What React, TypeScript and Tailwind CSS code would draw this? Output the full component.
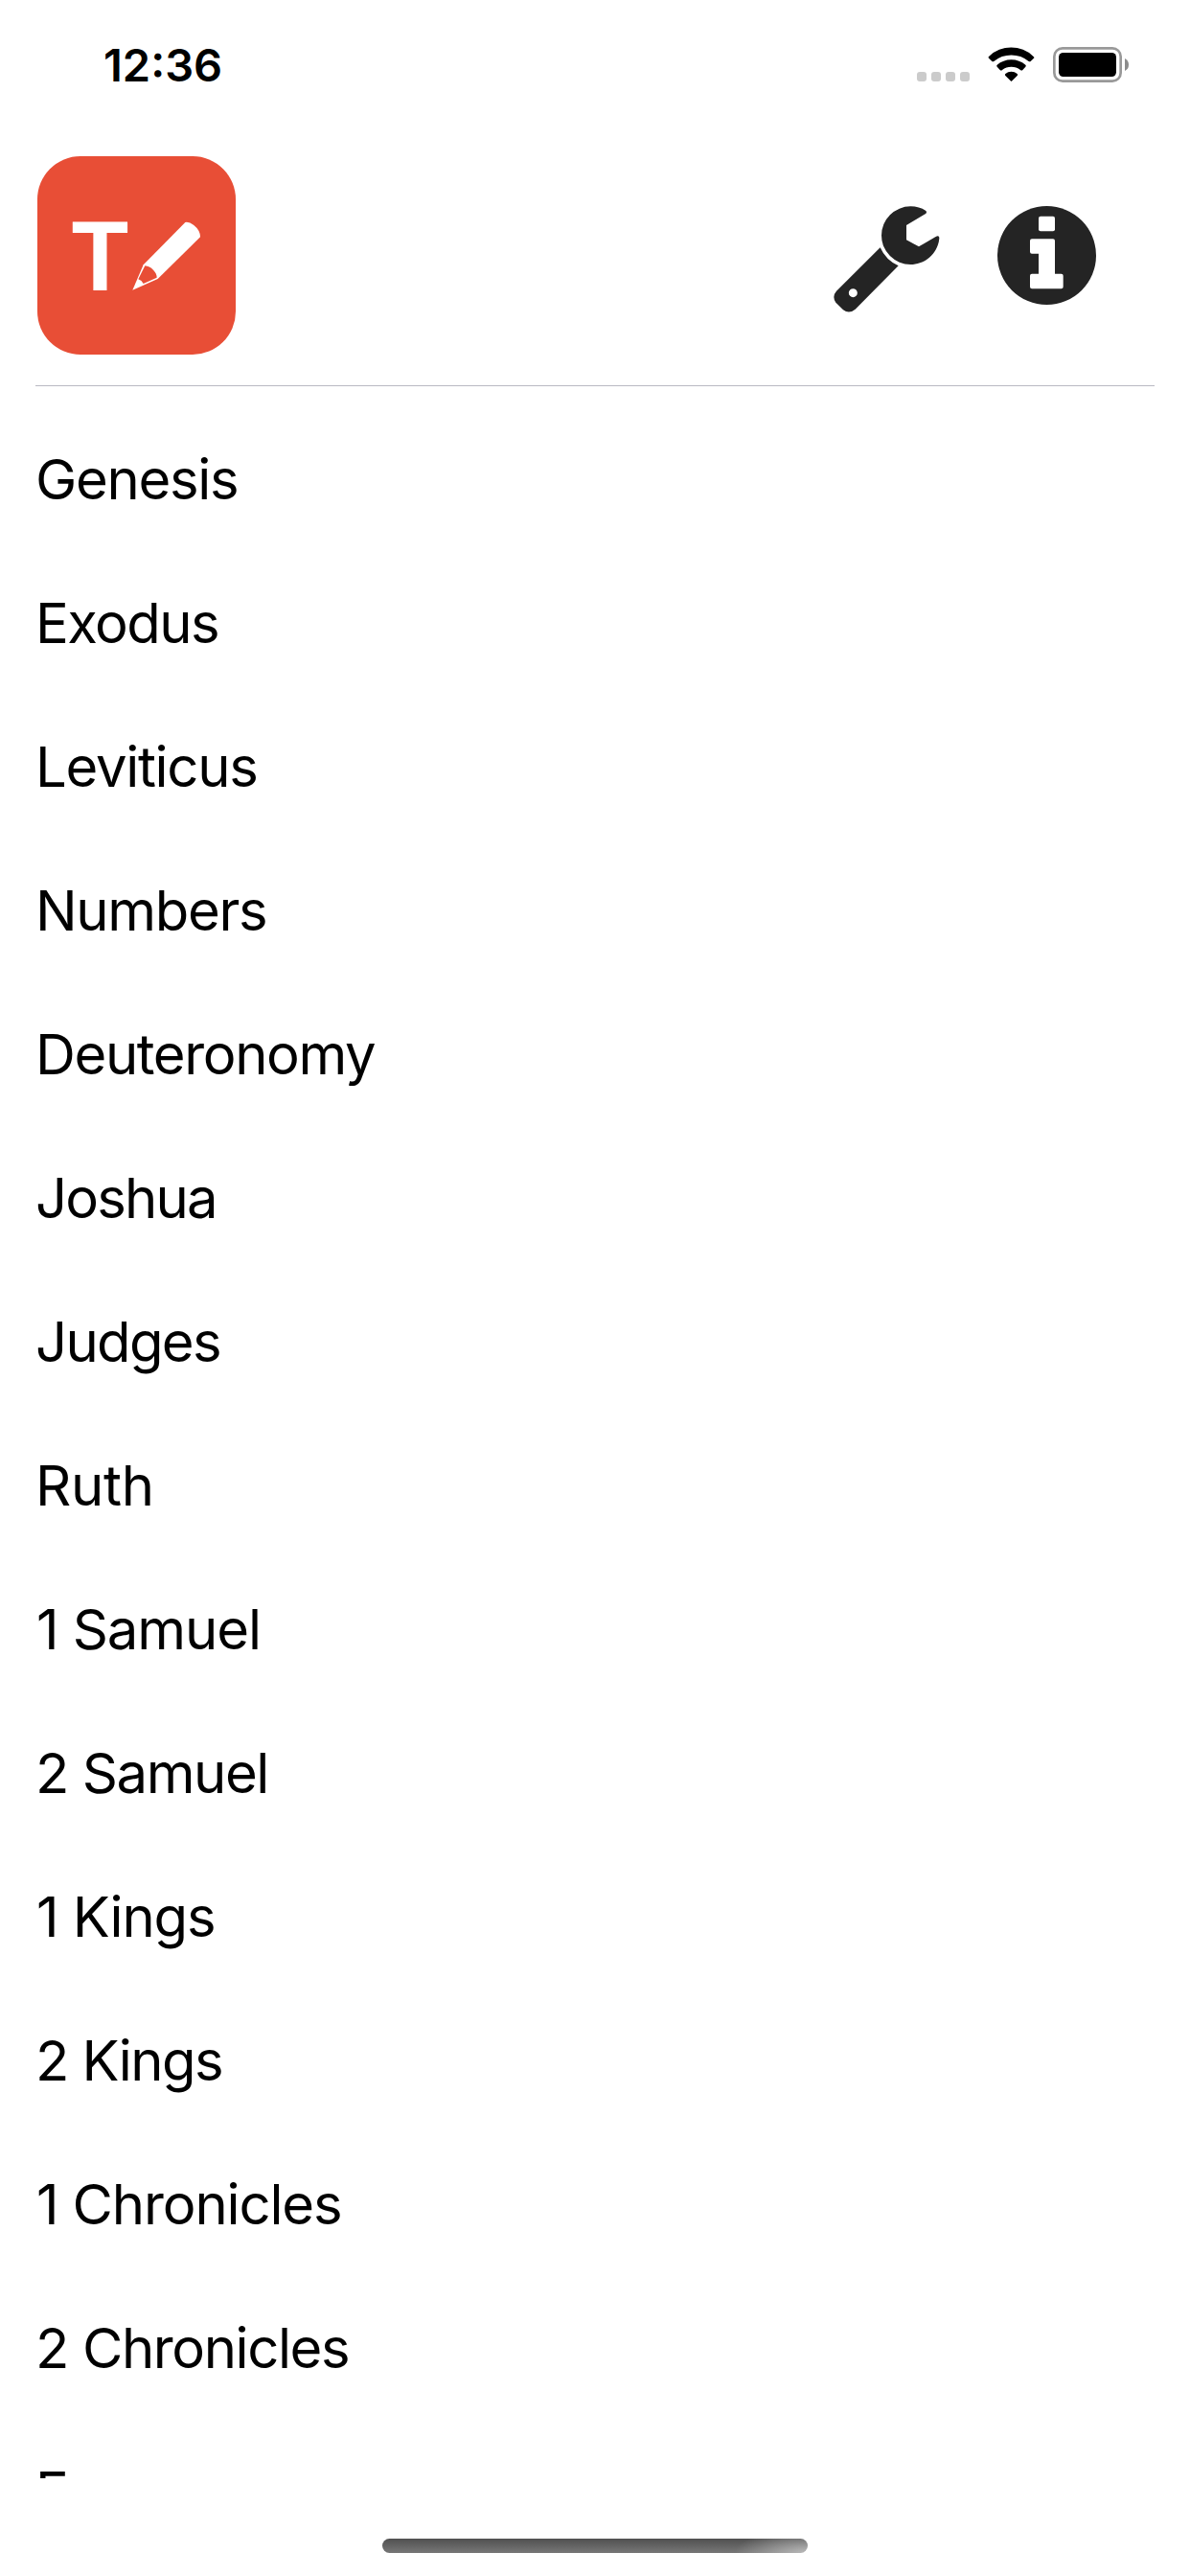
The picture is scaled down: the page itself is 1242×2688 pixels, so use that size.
import React from "react";

type Book = { name: string; className: string };

const books: Book[] = [
  { name: "Genesis", className: "tracking-[-1.3px]" },
  { name: "Exodus", className: "tracking-[-1.56px]" },
  { name: "Leviticus", className: "tracking-[-1.3px]" },
  { name: "Numbers", className: "tracking-[-1.33px]" },
  { name: "Deuteronomy", className: "tracking-[-1.38px]" },
  { name: "Joshua", className: "tracking-[-1.8px]" },
  { name: "Judges", className: "tracking-[-1.66px]" },
  { name: "Ruth", className: "tracking-[-0.3px]" },
  { name: "1 Samuel", className: "pl-px tracking-[-1.1px]" },
  { name: "2 Samuel", className: "tracking-[-1.44px]" },
  { name: "1 Kings", className: "pl-px tracking-[-1.1px]" },
  { name: "2 Kings", className: "tracking-[-1.57px]" },
  { name: "1 Chronicles", className: "pl-px tracking-[-1.14px]" },
  { name: "2 Chronicles", className: "tracking-[-1.39px]" },
  { name: "Ezra", className: "tracking-[-1.4px]" },
];

function WifiIcon() {
  return (
    <svg viewBox="567 147 147 111" className="h-[37px] w-[49px]" fill="#000">
      <path d="M571 176A100 100 0 0 1 709 176Q714 179 711 182L701 192Q698 194 695 192A86 86 0 0 0 586 192Q583 194 580 192L570 182Q567 179 571 176Z" />
      <path d="M596 203A68 68 0 0 1 685 203Q688 206 685 209L676 219Q673 222 669 219A46 46 0 0 0 612 219Q609 222 605 219L596 209Q593 206 596 203Z" />
      <path d="M622 231A30 30 0 0 1 659 231Q662 234 659 237L643 253Q640.5 256 638 253L622 237Q619 234 622 231Z" />
    </svg>
  );
}

function BatteryIcon() {
  return (
    <svg viewBox="771 147 240 111" className="h-[37px] w-[80px]">
      <rect x="775" y="151" width="208" height="103" rx="26" fill="none" stroke="#999" strokeWidth="8" />
      <rect x="789" y="165" width="180" height="75" rx="14" fill="#000" />
      <path d="M996 183Q1008 189 1008 202.500Q1008 216 996 222Z" fill="#8c8c8c" />
    </svg>
  );
}

function StatusBar() {
  return (
    <div className="flex h-[163px] shrink-0 items-start justify-between pl-[108px] pr-[63px]">
      <span className="mt-[39px] text-[47px] leading-[57px] font-semibold">12:36</span>
      <div className="mt-[49px] flex items-end gap-[19px]">
        <div className="mb-px flex gap-[5px]">
          {[0, 1, 2, 3].map((i) => (
            <span key={i} className="size-[10px] rounded-[3px] bg-[#cbcbcb]" />
          ))}
        </div>
        <WifiIcon />
        <BatteryIcon />
      </div>
    </div>
  );
}

function Logo() {
  return (
    <svg viewBox="117 490 621 621" className="size-[207px]">
      <rect x="117" y="490" width="621" height="621" rx="135" fill="#e84e36" />
      <text
        transform="translate(313.500 911) scale(.94 1)"
        textAnchor="middle"
        fontFamily="'Liberation Sans', Arial, sans-serif"
        fontWeight="700"
        fontSize="310"
        fill="#fff"
      >
        T
      </text>
      <path
        d="M580 697Q591 694 607 706Q627 722 627 743L494 874L415 909L449 830Z"
        fill="#fff"
      />
      <path d="M454 833Q468 834 480 846Q491 857 491 870L449 889Q444 878 433 875Z" fill="#e84e36" />
    </svg>
  );
}

function WrenchIcon() {
  return (
    <svg viewBox="84 645 333 333" className="size-[111px]" fill="#242424">
      <path d="M372 659C377 662 375 667 371 670L312 705V751L351 772L404 741C410 737 415 738 415 746C411 792 372 828 325 828A91 91 0 1 1 325 646C343 646 360 651 372 659Z" />
      <path
        fillRule="evenodd"
        d="M230 775Q248 815 287 832L152 968Q133 984 114 970L91 947Q78 928 93 911ZM145 903.500a13.500 13.500 0 1 0 0 27a13.500 13.500 0 1 0 0-27Z"
      />
    </svg>
  );
}

function InfoIcon() {
  return (
    <svg viewBox="597 646 309 309" className="size-[103px]">
      <circle cx="751.500" cy="800.500" r="154.500" fill="#242424" />
      <rect x="726" y="678" width="51" height="47" rx="6" fill="#fff" />
      <path
        d="M705 749H771Q777 749 777 755V858H797Q803 858 803 864V899Q803 905 797 905H705Q699 905 699 899V864Q699 858 705 858H726V795H705Q699 795 699 789V755Q699 749 705 749Z"
        fill="#fff"
      />
    </svg>
  );
}

export default function App() {
  return (
    <div className="flex h-[2688px] w-[1242px] flex-col overflow-hidden bg-white font-['Inter',sans-serif] text-black">
      <StatusBar />
      <header className="flex h-[239px] shrink-0 items-start justify-between pl-[39px] pr-[98px]">
        <Logo />
        <div className="mt-[52px] flex items-start gap-[60px]">
          <WrenchIcon />
          <InfoIcon />
        </div>
      </header>
      <div className="mx-[37px] h-px shrink-0 bg-[#b9b9c3]" />
      <ul className="h-[2183px] shrink-0 overflow-hidden pt-[22px] pl-[37px]">
        {books.map((book) => (
          <li key={book.name} className="h-[150px] text-[58px] leading-[150px] whitespace-nowrap">
            <span className={book.className}>{book.name}</span>
          </li>
        ))}
      </ul>
      <div className="flex justify-center pt-[63px]">
        <div className="h-[15px] w-[444px] rounded-full bg-[radial-gradient(ellipse_76px_26px_at_100%_100%,rgba(255,255,255,0.5),transparent),linear-gradient(to_bottom,#505050,#777777)]" />
      </div>
    </div>
  );
}
